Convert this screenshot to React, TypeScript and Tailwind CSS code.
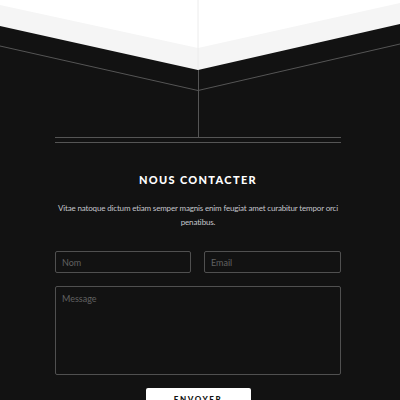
export default function App() {
  return (
    <div
      className="min-h-screen w-[400px] bg-[#121212] text-white overflow-hidden"
      style={{ fontFamily: "Lato, 'Open Sans', sans-serif" }}
    >
      {/* header drawing */}
      <svg width="400" height="137" viewBox="0 0 400 137" className="block">
        <rect x="0" y="0" width="400" height="137" fill="#121212" />
        <polygon points="0,0 400,0 400,24 198,70 0,26" fill="#f5f5f5" />
        <polygon points="0,0 400,0 400,3 198,48 0,5" fill="#ffffff" />
        <line x1="198" y1="0" x2="198" y2="70" stroke="#ececec" strokeWidth="1" />
        <line x1="0" y1="46" x2="198" y2="90.5" stroke="#555" strokeWidth="1" />
        <line x1="198" y1="90.5" x2="400" y2="44" stroke="#555" strokeWidth="1" />
        <line x1="198.5" y1="70" x2="198.5" y2="137" stroke="#555" strokeWidth="1" />
      </svg>

      <div className="pl-[55px] pr-[59px]">
        <div className="h-[6px] border-y border-[#555]" />

        <h2 className="mt-[30px] text-center text-[11px] font-black tracking-[0.12em] leading-[14px] text-white">
          NOUS CONTACTER
        </h2>

        <p className="mt-[14px] text-center text-[8px] tracking-[-0.02em] leading-[14px] text-[#c4c6cc]">
          Vitae natoque dictum etiam semper magnis enim feugiat amet curabitur tempor orci
          penatibus.
        </p>

        <form className="mt-[22px] flex flex-col gap-[13px]">
          <div className="flex gap-[13px]">
            <input
              placeholder="Nom"
              className="h-[22px] w-[136px] rounded-[2px] border border-[#505050] bg-transparent px-[6px] text-[9px] text-white placeholder:text-[#616161] outline-none"
            />
            <input
              placeholder="Email"
              className="h-[22px] w-[137px] rounded-[2px] border border-[#505050] bg-transparent px-[6px] text-[9px] text-white placeholder:text-[#616161] outline-none"
            />
          </div>
          <textarea
            placeholder="Message"
            className="h-[89px] w-full resize-none rounded-[2px] border border-[#505050] bg-transparent px-[6px] py-[5px] text-[9px] text-white placeholder:text-[#616161] outline-none"
          />
          <div className="flex justify-center">
            <button
              type="button"
              className="flex h-[22px] w-[105px] items-center justify-center rounded-[2px] bg-white text-[8px] font-black tracking-[0.2em] text-[#121212]"
            >
              ENVOYER
            </button>
          </div>
        </form>
      </div>
    </div>
  );
}
